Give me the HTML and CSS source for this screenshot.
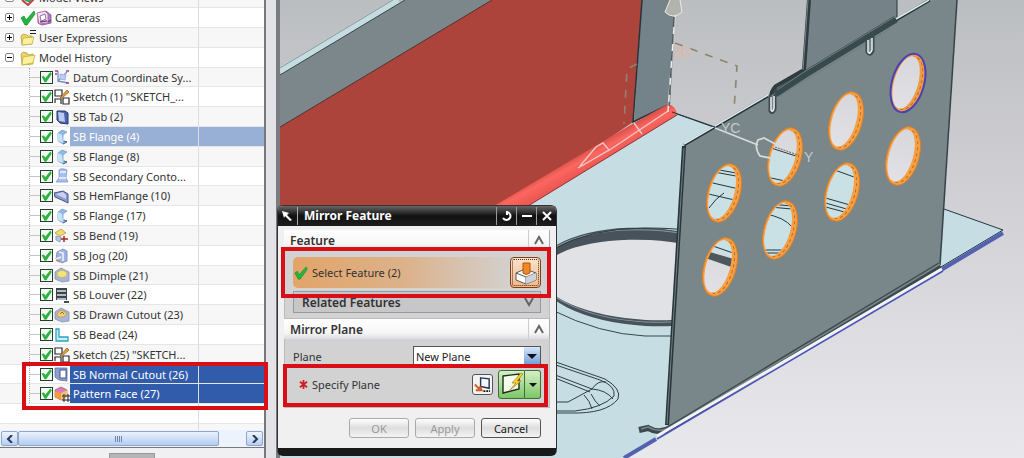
FILE: index.html
```
<!DOCTYPE html>
<html lang="en">
<head>
  <meta charset="UTF-8">
  <meta name="viewport" content="width=device-width, initial-scale=1.0">
  <title>Mirror Feature</title>
  <link rel="stylesheet" href="styles.css">
</head>
<body>

  <svg class="symbols" aria-hidden="true">
    <symbol id="check" viewBox="0 0 16 16"><path d="M1 8 4 6 6 10 14 1 15 4 7 15 5 15Z" fill="#22b83c" stroke="#12862a" stroke-width=".7"/></symbol>
    <symbol id="views" viewBox="0 0 16 16"><path d="M1 8 7 3 14 6 9 12Z" fill="#3cb899" stroke="#237f69"/><path d="M2 10 8 15 15 8" fill="none" stroke="#b8453a" stroke-width="2"/></symbol>
    <symbol id="camera" viewBox="0 0 16 16"><path d="M2 5 10 1 15 5 15 13 6 15 2 13Z" fill="#a883c4" stroke="#7a4b93" stroke-width=".8"/><path d="M1 3 9 1 12 4 12 13 3 14Z" fill="#f3e2f3" stroke="#c15d86" stroke-width=".9"/><path d="M4 6 9 4 10 9 5 11Z" fill="#fff" stroke="#8a72b0"/><path d="M4 12 11 11M12 12 15 10" stroke="#6a3f9a" stroke-width="1.4"/></symbol>
    <symbol id="folder" viewBox="0 0 16 16"><path d="M1 4 3 2 7 3 8 5 13 4 13 14 2 15Z" fill="#e9d568" stroke="#b9a137" stroke-width=".8"/><path d="M3 7 15 5 13 13 2 15Z" fill="#fbf09d" stroke="#c8b14b" stroke-width=".8"/></symbol>
    <symbol id="folder-eq" viewBox="0 0 16 16"><path d="M1 6 3 4 7 5 8 6 12 6 12 14 2 15Z" fill="#e9d568" stroke="#b9a137" stroke-width=".8"/><path d="M3 8 14 7 12 14 2 15Z" fill="#fbf09d" stroke="#c8b14b" stroke-width=".8"/><path d="M10 .5H16M10 3.5H16" stroke="#222"/></symbol>
    <symbol id="datum" viewBox="0 0 16 16"><path d="M4 13V2M4 12 14 14M4 12 13 3" fill="none" stroke="#7d8bc4" stroke-width="1.3"/><path d="M6 5 12 6 11 11 6 10Z" fill="#bfcdf0" stroke="#8ba0dc" stroke-width=".7"/><path d="M1 2H4M12 2H15M12 14H15M1 5H3" stroke="#a5487c" stroke-width="1.5"/></symbol>
    <symbol id="sketch" viewBox="0 0 16 16"><path d="M1 1H8V7H1ZM1 14V10H7V15M9 15V9H15V15Z" fill="#fff" stroke="#2b2b2b" stroke-width="1.2"/><path d="M6 9 13 1 15 3 8 9Z" fill="#e5a73a" stroke="#8b5a1b" stroke-width=".8"/></symbol>
    <symbol id="tab" viewBox="0 0 16 16"><path d="M3 2 11 2 14 4 14 15 6 14 3 11Z" fill="#4c62ad" stroke="#27366f"/><path d="M4 3 10 4 11 13 5 12Z" fill="#b9c9f0"/></symbol>
    <symbol id="flange" viewBox="0 0 16 16"><path d="M4 4 8 1 13 3 9 6 9 12 13 13 9 15 4 12Z" fill="#8ebbe2" stroke="#6f98c4" stroke-width=".7"/><path d="M4 4 8 6 9 14 4 12Z" fill="#cae4f7"/><path d="M10 12 13 13 9 15" fill="none" stroke="#4f6d92"/></symbol>
    <symbol id="contour" viewBox="0 0 16 16"><path d="M5 2C7 0 11 1 13 2L12 10 14 14 2 14 5 10Z" fill="#a9bdee" stroke="#7f96ce" stroke-width=".8"/><path d="M6 4 12 4M5 10 12 10" stroke="#dfe8ff" stroke-width="2"/></symbol>
    <symbol id="hem" viewBox="0 0 16 16"><path d="M0 5 9 3 14 6 14 15 10 13 1 9Z" fill="#8e9acb" stroke="#4a5588"/><path d="M2 6 9 4 12 7 12 11Z" fill="#cad2ef"/></symbol>
    <symbol id="bend" viewBox="0 0 16 16"><path d="M1 5 7 1 12 5 6 8Z" fill="#f1db72" stroke="#b69b31" stroke-width=".8"/><path d="M2 8 7 9 6 14 2 12Z" fill="#b9c6e8" stroke="#8290bd" stroke-width=".8"/><path d="M7 11H14M10 8V14" stroke="#a42b2b" stroke-width="1.5"/></symbol>
    <symbol id="jog" viewBox="0 0 16 16"><path d="M3 4 9 1 13 3 13 13 8 15 2 11Z" fill="#9eb3e2" stroke="#7488bd" stroke-width=".8"/><path d="M5 4 9 5 9 13M2 11 7 9" fill="none" stroke="#eff4ff" stroke-width="1.6"/><path d="M2 12 6 14" stroke="#c08878" stroke-width="1.5"/></symbol>
    <symbol id="dimple" viewBox="0 0 16 16"><path d="M1 5 7 1 15 5 15 14 8 15 1 12Z" fill="#a9b5d6" stroke="#8591b4" stroke-width=".8"/><ellipse cx="8" cy="7" rx="5" ry="3.5" fill="#f2e37a" stroke="#c6b24d" stroke-width=".7"/></symbol>
    <symbol id="louver" viewBox="0 0 16 16"><path d="M2 1H13V13H2Z" fill="#3d444c"/><path d="M3 4H12M3 8H12M3 12H12" stroke="#dde4ea" stroke-width="1.4"/><path d="M10 15H15" stroke="#111" stroke-width="1.5"/></symbol>
    <symbol id="drawn" viewBox="0 0 16 16"><path d="M1 5 7 1 15 5 15 14 8 15 1 12Z" fill="#a9b5d6" stroke="#8591b4" stroke-width=".8"/><path d="M3 7 7 3 13 6 10 10 4 10Z" fill="#f0d17a" stroke="#b98f45" stroke-width=".7"/><path d="M6 7 8 5 10 7" fill="none" stroke="#a06c2c"/></symbol>
    <symbol id="bead" viewBox="0 0 16 16"><path d="M2 2H5V10H14V14H2Z" fill="#bff3fb" stroke="#2ea3be" stroke-width="1.3"/></symbol>
    <symbol id="cutout" viewBox="0 0 16 16"><path d="M1 2 13 2 13 15 5 14 1 11Z" fill="#8fa0cd" stroke="#5c6da4" stroke-width=".8"/><path d="M6 4H12V12H6Z" fill="#fff" stroke="#44548a"/></symbol>
    <symbol id="pattern" viewBox="0 0 16 16"><path d="M1 4 7 1 13 4 13 10 7 14 1 11Z" fill="#d879c4" stroke="#9a5b32" stroke-width=".7"/><path d="M1 5 7 7 7 14 1 11Z" fill="#f39a3a"/><path d="M7 7 13 4 13 10 7 14Z" fill="#f5c069"/><path d="M9 9H11V11H9ZM13 9H15V11H13ZM9 13H11V15H9ZM13 13H15V15H13Z" fill="#fff" stroke="#222"/></symbol>
  </svg>

  <div class="app">
    <aside class="navigator">
      <ul class="tree" id="tree"></ul>
      <div class="mark mark-tree"></div>
      <div class="scrollbar">
        <button class="scroll-btn" aria-label="Scroll left"><svg viewBox="0 0 8 8"><path d="M6 0 2 4 6 8" /></svg></button>
        <div class="track"><div class="thumb"><span></span><span></span><span></span><span></span></div></div>
        <button class="scroll-btn" aria-label="Scroll right"><svg viewBox="0 0 8 8"><path d="M2 0 6 4 2 8" /></svg></button>
      </div>
      <div class="pane-handle"><span></span></div>
    </aside>
    <div class="splitter"></div>

    <main class="viewport">
      <svg class="model" viewBox="280 0 744 458" preserveAspectRatio="xMinYMin slice" role="img" aria-label="Sheet metal part">
        <defs>
          <linearGradient id="sky" x1="0" y1="0" x2="0" y2="1">
            <stop offset="0" stop-color="#bbbec0"/>
            <stop offset=".3" stop-color="#cbcbcf"/>
            <stop offset="1" stop-color="#e9e9ed"/>
          </linearGradient>
          <linearGradient id="hole" x1="0" y1="0" x2="0" y2="1">
            <stop offset="0" stop-color="#d5d5d9"/>
            <stop offset="1" stop-color="#e4e3e7"/>
          </linearGradient>
          <linearGradient id="hemfill" gradientUnits="userSpaceOnUse" x1="580" y1="150" x2="590" y2="168">
            <stop offset="0" stop-color="#cf4641"/>
            <stop offset=".5" stop-color="#fb6660"/>
            <stop offset="1" stop-color="#ee5853"/>
          </linearGradient>
          <clipPath id="bore"><ellipse cx="-2" cy="0" rx="12" ry="27"/></clipPath>
        </defs>
        <rect x="280" y="0" width="744" height="458" fill="url(#sky)"/>

        <!-- floor plate -->
        <path d="M280 200H530L677 114 1003 230V233L628 458H280Z" fill="#c6dde3"/>
        <path d="M677 114 1003 230" stroke="#23363c" fill="none"/>
        <path d="M1003 230 941 267" stroke="#23363c" fill="none"/>
        <path d="M1003 233 941 270M656 439 624 458" stroke="#5361b0" stroke-width="4" fill="none"/>

        <!-- large round opening -->
        <g transform="rotate(3 648 278)">
          <ellipse cx="648" cy="277" rx="112" ry="49" fill="#47525a"/>
          <ellipse cx="648" cy="276" rx="110" ry="46" fill="none" stroke="#87999f"/>
          <ellipse cx="648" cy="280" rx="107" ry="40" fill="#e1e2e5"/>
        </g>
        <path d="M552 250Q590 228 645 228T690 236" fill="none" stroke="#2b3b42"/>
        <path d="M552 310Q600 334 645 336H672" fill="none" stroke="#34464d"/>

        <!-- bead -->
        <g fill="none" stroke="#2d3f46">
          <path d="M550 360 605 379Q622 389 618 399Q606 414 570 413H550"/>
          <path d="M550 363 600 380Q616 386 614 396Q602 408 575 411H550"/>
          <path d="M550 373 592 389Q598 380 606 382M550 402H568L592 389Q606 390 613 399M591 394Q595 402 600 406M584 395Q590 401 592 409M550 376 590 392"/>
        </g>

        <!-- back wall -->
        <path d="M280 75 405 0H492L280 127Z" fill="#7b878b"/>
        <path d="M280 71 398 0" stroke="#c5dce1" stroke-width="6"/>
        <path d="M280 75 405 0" stroke="#384a52" fill="none"/>
        <path d="M280 68 393 0" stroke="#8a9a9f" fill="none"/>
        <path d="M280 127 492 0H642L633 122 510 206H280Z" fill="#ad443c"/>
        <path d="M280 127 492 0" stroke="#4f3030"/>
        <path d="M642 0H676L670 106 634 122Z" fill="#74838a"/>
        <path d="M642 0 633 122 668 105" fill="none" stroke="#26333a" stroke-width="1.5"/>
        <path d="M494 206 634 123 668 104Q676 106 677 115L528 206Z" fill="url(#hemfill)"/>
        <path d="M677 115 528 206" stroke="#8e3534" fill="none"/>

        <!-- datum axes -->
        <path d="M675 14 668 112" stroke="#edeeee" stroke-width="1.5" fill="none"/>
        <path d="M675 0 669 106" stroke="#53595b" stroke-width="1.5" stroke-dasharray="10 7" fill="none"/>
        <path d="M670 0 665 12Q673 20 682 12L680 0" fill="#b1b3ae" stroke="#eeece0"/>
        <path d="M675 43 737 66 734 110M637 64 627 69 624 124" stroke="#8f8270" stroke-width="1.6" stroke-dasharray="8 8" fill="none"/>
        <path d="M668 111 608 151M580 166 596 147 603 143 609 150 578 168M634 123 642 134" fill="none" stroke="#f0c9c2" stroke-width="1.4"/>
        <text x="673" y="57" class="axis axis-z">ZC</text>

        <!-- rear tab -->
        <path d="M809 0H897V18L770 98 775 89 803 72Z" fill="#758287"/>
        <path d="M809 0 804 70 776 86Q771 91 771 98" fill="none" stroke="#2e3b40" stroke-width="4"/>
        <path d="M808 0 803 70" stroke="#78868c" fill="none"/>
        <path d="M897 0V18" stroke="#26343a"/>

        <!-- perforated wall -->
        <path d="M684 146 770 96 806 75 896 21 932 0H957L940 266 668 430Z" fill="#79868a"/>
        <path d="M775 94 804 75 896 19" stroke="#394a4e" stroke-width="7" fill="none"/>
        <path d="M777 90 804 72 896 16M778 97 804 81 890 29" stroke="#6d7f83" fill="none"/>
        <path d="M896 20 930 0M684 145 768 96" stroke="#22343b" stroke-width="3" fill="none"/>
        <path d="M896 19 929 0M684 144 768 95" stroke="#e4eaec" stroke-width="1.5" fill="none"/>
        <path d="M957 0 940 265" stroke="#35434a" stroke-width="1.5"/>
        <path d="M684 146 667 425" stroke="#283539" stroke-width="4"/>
        <path d="M684 148 667 424" stroke="#718086" stroke-width="1"/>
        <path d="M770 95V111Q773 115 775 109V94M867 38V52Q870 57 873 51V35" fill="none" stroke="#3d4c52" stroke-width="3"/>
        <path d="M771 97V110Q773 113 774 108V96M868 40V52Q870 55 872 50V38" fill="none" stroke="#eef1f2" stroke-width="1.5"/>
        <path d="M940 265 672 427Q660 435 648 428L639 430" fill="none" stroke="#3c494c" stroke-width="6"/>
        <path d="M940 264 672 426Q660 434 648 427L641 429" fill="none" stroke="#7a878a" stroke-width="1.5"/>
        <path d="M942 269 657 436" stroke="#f3f4f8" stroke-width="3"/>
        <path d="M943 271 657 439" stroke="#4b52b8" stroke-width="1.5"/>

        <g id="holes"></g>

        <path d="M672 112 715 127" stroke="#25363d" fill="none"/>
        <path d="M715 128 758 145M770 158 760 156Q754 147 758 140L764 138 779 146" fill="none" stroke="#d5dbda" stroke-width="1.8"/>
        <path d="M775 147 798 155" stroke="#5c665c" stroke-dasharray="2 1"/>
        <text x="721" y="133" class="axis">YC</text>
        <text x="804" y="162" class="axis">Y</text>
      </svg>
    </main>

    <section class="dialog" aria-label="Mirror Feature">
      <header class="title-bar">
        <svg class="title-cursor" viewBox="0 0 12 12"><path d="M1 1 8 3 6 5 11 10 9 11 4 6 3 8Z"/></svg>
        <h1>Mirror Feature</h1>
        <button aria-label="Reset"><svg viewBox="0 0 12 12"><path d="M6 2A4 4 0 1 1 2 8M6 1V5"/></svg></button>
        <button aria-label="Minimize"><svg viewBox="0 0 12 12"><path d="M1 6H11"/></svg></button>
        <button aria-label="Close"><svg viewBox="0 0 12 12"><path d="M2 2 10 10M10 2 2 10"/></svg></button>
      </header>
      <div class="dialog-body">
        <div class="group-head"><h2>Feature</h2><button aria-label="Collapse Feature"><svg viewBox="0 0 12 12"><path d="M2 10 6 3 10 10"/></svg></button></div>
        <div class="group">
          <div class="select-row">
            <svg class="row-check"><use href="#check"/></svg>
            <span>Select Feature (2)</span>
            <button class="pick-btn" aria-label="Select Feature">
              <svg viewBox="0 0 26 26"><path d="M3 13 12 9 23 13 23 20 13 24 3 20Z" fill="#fff" stroke="#55585c"/><path d="M3 13 13 17 23 13M13 17V24" fill="none" stroke="#55585c"/><path d="M13 17 23 13V20L13 24Z" fill="#cdd2d8"/><path d="M10 3H17V13Q13 16 10 13Z" fill="#f08a24" stroke="#b4520d"/></svg>
            </button>
          </div>
          <div class="related"><h3>Related Features</h3><button aria-label="Expand Related Features"><svg viewBox="0 0 12 12"><path d="M2 2 6 9 10 2"/></svg></button></div>
        </div>
        <div class="group-head"><h2>Mirror Plane</h2><button aria-label="Collapse Mirror Plane"><svg viewBox="0 0 12 12"><path d="M2 10 6 3 10 10"/></svg></button></div>
        <div class="group group-plane">
          <div class="plane-row">
            <label for="plane">Plane</label>
            <div class="combo">
              <select id="plane"><option>New Plane</option><option>Existing Plane</option></select>
              <span class="combo-arrow"></span>
            </div>
          </div>
          <div class="specify-row">
            <svg class="required" viewBox="0 0 10 10"><path d="M5 0V10M1 2 9 8M9 2 1 8"/></svg>
            <span>Specify Plane</span>
            <button class="plane-btn" aria-label="Plane Dialog">
              <svg viewBox="0 0 20 20"><path d="M8 3 17 4V14L8 12Z" fill="#f5f8ff" stroke="#26355c" stroke-width="1.5"/><path d="M2 10 6 14 9 13M3 16H9L7 12" fill="none" stroke="#cc5a25" stroke-width="2"/><path d="M11 17H18" stroke="#111" stroke-width="2" stroke-dasharray="2 1"/></svg>
            </button>
            <button class="type-btn" aria-label="Inferred plane">
              <svg viewBox="0 0 26 26"><path d="M4 5 20 3V18L4 22Z" fill="#f2fbec" stroke="#1f2b1c" stroke-width="1.4"/><path d="M22 2 13 12H17L11 19 22 10H18L24 3Z" fill="#ffd42e" stroke="#a87710" stroke-width=".7"/></svg>
            </button>
            <button class="type-arrow" aria-label="Plane types"></button>
          </div>
        </div>
        <div class="actions">
          <button disabled>OK</button>
          <button disabled>Apply</button>
          <button>Cancel</button>
        </div>
      </div>
      <div class="mark mark-feature"></div>
      <div class="mark mark-plane"></div>
    </section>
  </div>

  <script>
    const groups = [
      { label: "Model Views", icon: "views", sign: "+" },
      { label: "Cameras", icon: "camera", sign: "+", ok: true },
      { label: "User Expressions", icon: "folder-eq", sign: "+" },
      { label: "Model History", icon: "folder", sign: "-" }
    ];

    const features = [
      ["Datum Coordinate Sy...", "datum"],
      ["Sketch (1) \"SKETCH_...", "sketch"],
      ["SB Tab (2)", "tab"],
      ["SB Flange (4)", "flange", "soft"],
      ["SB Flange (8)", "flange"],
      ["SB Secondary Conto...", "contour"],
      ["SB HemFlange (10)", "hem"],
      ["SB Flange (17)", "flange"],
      ["SB Bend (19)", "bend"],
      ["SB Jog (20)", "jog"],
      ["SB Dimple (21)", "dimple"],
      ["SB Louver (22)", "louver"],
      ["SB Drawn Cutout (23)", "drawn"],
      ["SB Bead (24)", "bead"],
      ["Sketch (25) \"SKETCH...", "sketch"],
      ["SB Normal Cutout (26)", "cutout", "selected"],
      ["Pattern Face (27)", "pattern", "selected"]
    ];

    const icon = name => `<svg class="icon"><use href="#${name}"/></svg>`;

    const groupRows = groups.map(g => `
      <li class="row">
        <div class="cell">
          <button class="expander" aria-label="${g.label}">${g.sign === "+" ? '<svg viewBox="0 0 7 7"><path d="M1 3H6V4H1ZM3 1H4V6H3Z"/></svg>' : '<svg viewBox="0 0 7 7"><path d="M1 3H6V4H1Z"/></svg>'}</button>
          ${g.ok ? icon("check") : ""}${icon(g.icon)}
          <span class="group-label">${g.label}</span>
        </div>
      </li>`);

    const featureRows = features.map(([label, name, state], i) => `
      <li class="row feature ${state || ""}">
        <div class="cell">
          <input type="checkbox" id="f${i}" checked>
          ${icon(name)}
          <label for="f${i}">${label}</label>
        </div>
        <div class="cell-rest"></div>
      </li>`);

    const emptyRows = ['<li class="row"><div class="cell"></div></li>', '<li class="row"><div class="cell"></div></li>'];

    document.getElementById("tree").innerHTML = [...groupRows, ...featureRows, ...emptyRows].join("");

    // x, y of each hole, what shows through it
    const holes = [
      [908, 83, "", "blue"],
      [846, 121, ""],
      [903, 156, ""],
      [785, 157, '<path class="floor" d="M-20-10 20 4V40H-20Z"/><path class="edge" d="M-20-11 20 2M-14 21 5 25"/>'],
      [842, 192, '<path class="floor" d="M-20-40H20V40H-20Z"/><path class="edge" d="M-10-23 12-15M-20 5 15 15M-20 10 15 20M-20 14 10 22"/>'],
      [724, 193, '<path class="floor" d="M-20-40H20V40H-20Z"/><path class="edge" d="M-10-24 12-20M-10-21 12-17M-20-12 15-4M-20 0 15 8M-15 15Q-8 5 0 0"/>'],
      [780, 230, '<path class="floor" d="M-20-40H20V40H-20Z"/><path class="edge" d="M-10-26 12-24M-10-23 12-21M-15-16Q4-13 12-3M-20 20H10M-20 23H10"/>'],
      [720, 267, '<path class="floor" d="M-20-40H20V-10L-20-18Z"/><path class="rim" d="M-20-18 20-6V3L-20-11Z"/><path class="edge" d="M-10-22 16-13"/>']
    ];

    document.getElementById("holes").innerHTML = holes.map(([x, y, view, tone]) => `
      <g transform="translate(${x} ${y})">
        <g transform="rotate(16)">
          <ellipse class="${tone === "blue" ? "ring-blue" : "ring"}" rx="16" ry="30"/>
          <ellipse class="ring-shade" cx="1" rx="12" ry="27"/>
          <g clip-path="url(#bore)">
            <rect x="-20" y="-40" width="40" height="80" fill="url(#hole)"/>
            <g transform="rotate(-16)">${view}</g>
          </g>
        </g>
      </g>`).join("");
  </script>
</body>
</html>
```
FILE: styles.css
```
* {
  box-sizing: border-box;
}

body {
  margin: 0;
  font-family: "Noto Sans", "Open Sans", sans-serif;
  font-size: 11px;
  color: #333;
}

h1, h2, h3, ul {
  margin: 0;
  padding: 0;
}

button, select {
  font: inherit;
  padding: 0;
}

.symbols {
  display: none;
}

.app {
  position: relative;
  display: flex;
  height: 100vh;
  overflow: hidden;
}

/* part navigator */
.navigator {
  position: relative;
  display: flex;
  flex-direction: column;
  flex: 0 0 266px;
  background: #f0f0f2;
  border-right: 2px solid #77787c;
}

.tree {
  flex: 1;
  min-height: 0;
  overflow: hidden;
  margin-top: -12px;
  list-style: none;
  background: #fff;
}

.row {
  display: flex;
  height: 20px;
  border-bottom: 1px solid #e6e6e8;
}

.row:nth-child(5n) {
  height: 19px;
}

.row:nth-child(odd) {
  background: #f7f7f8;
}

.cell {
  display: flex;
  align-items: center;
  flex: 0 0 199px;
  padding-left: 5px;
  border-right: 1px solid #dcdce0;
  white-space: nowrap;
}

.cell-rest {
  flex: 1;
}

.feature .cell {
  position: relative;
  padding-left: 40px;
}

/* dotted guide lines */
.feature .cell::before {
  content: "";
  position: absolute;
  left: 29px;
  top: 0;
  width: 10px;
  height: 100%;
  border-left: 1px dotted #aaa;
  background: linear-gradient(#c4c4c4, #c4c4c4) 0 50% / 10px 1px no-repeat;
}

.expander {
  width: 9px;
  height: 9px;
  margin-right: 6px;
  border: 1px solid #85878c;
  border-radius: 2px;
  background: #fff;
  line-height: 0;
}

.expander svg {
  width: 7px;
  height: 7px;
}

.icon {
  flex: none;
  width: 16px;
  height: 16px;
}

.group-label {
  margin-left: 3px;
}

input[type="checkbox"] {
  appearance: none;
  flex: none;
  width: 13px;
  height: 13px;
  margin: 0 1px 0 0;
  border: 1px solid #24402c;
  background: #f2faf2;
}

input[type="checkbox"]:checked::before {
  content: "";
  display: block;
  height: 11px;
  background: #2fb243;
  clip-path: polygon(5% 45%, 25% 40%, 40% 60%, 85% 5%, 98% 22%, 48% 98%, 32% 98%);
}

.feature label {
  flex: 1;
  display: flex;
  align-items: center;
  align-self: stretch;
  padding-left: 3px;
}

.soft label,
.soft .cell-rest {
  background: #98afd6;
  color: #fff;
}

.selected label,
.selected .cell-rest {
  background: #315cac;
  color: #fff;
}

.scrollbar {
  display: flex;
  height: 18px;
  padding: 1px;
  background: #edf3fc;
  border-bottom: 1px solid #777;
}

.scroll-btn {
  width: 17px;
  border: 1px solid #8fa5ca;
  border-radius: 2px;
  background: linear-gradient(#f0f5fe, #b6cdf2);
  line-height: 0;
}

.scroll-btn svg {
  width: 8px;
  height: 8px;
  fill: none;
  stroke: #24385e;
  stroke-width: 2;
}

.track {
  flex: 1;
}

.thumb {
  display: flex;
  justify-content: center;
  align-items: center;
  gap: 1px;
  width: 88%;
  height: 100%;
  border: 1px solid #8fa5ca;
  border-radius: 2px;
  background: linear-gradient(#eaf2fe, #b4ccf2);
}

.thumb span {
  width: 1px;
  height: 6px;
  background: #6f86ae;
}

.pane-handle {
  height: 10px;
  padding-top: 5px;
}

.pane-handle span {
  display: block;
  width: 46px;
  height: 7px;
  margin: 0 auto;
  background: #b5b5b8;
  border: 1px solid #98989c;
}

.splitter {
  flex: 0 0 14px;
  background: #e3e3e7;
  border-right: 4px solid #797b80;
}

/* graphics window */
.viewport {
  flex: 1;
  min-width: 0;
}

.model {
  display: block;
  width: 100%;
  height: 100%;
}

.axis {
  font-family: "Liberation Sans", sans-serif;
  font-size: 14px;
  fill: #c3cccc;
}

.axis-z {
  fill: #e6b79c;
}

.ring {
  fill: #f6a043;
  stroke: #dd8127;
}

.ring-blue {
  fill: #ef9a45;
  stroke: #4a40b4;
  stroke-width: 2;
}

.ring-shade {
  fill: none;
  stroke: #b86d28;
  stroke-dasharray: 3 3;
}

.floor {
  fill: #c9e0e5;
}

.rim {
  fill: #4e575b;
}

.edge {
  fill: none;
  stroke: #24363c;
}

/* mirror feature dialog */
.dialog {
  position: absolute;
  left: 277px;
  top: 205px;
  width: 280px;
  border: 1px solid #333;
  border-bottom: 8px solid #191919;
  border-radius: 6px;
  background: #f0f0f0;
}

.title-bar {
  display: flex;
  align-items: center;
  height: 20px;
  border-radius: 5px 5px 0 0;
  background: linear-gradient(#666, #111 50%, #1d1d1d);
  color: #fff;
}

.title-cursor {
  width: 12px;
  height: 12px;
  margin: 0 4px 0 3px;
  fill: #fff;
}

.title-bar h1 {
  flex: 1;
  padding-left: 6px;
  border-left: 1px solid #aaa;
  font-size: 12px;
  line-height: 18px;
}

.title-bar button {
  width: 20px;
  height: 18px;
  border: 0;
  border-left: 1px solid #999;
  background: none;
  line-height: 0;
}

.title-bar button svg {
  width: 12px;
  height: 12px;
  fill: none;
  stroke: #fff;
  stroke-width: 2;
}

.dialog-body {
  padding: 4px 6px 10px;
}

.group-head {
  display: flex;
  align-items: center;
  height: 20px;
  background: linear-gradient(#fff, #f6f6f6 70%, #dcdce2);
}

.group-head h2,
.related h3 {
  flex: 1;
  padding-left: 6px;
  font-size: 12px;
  font-weight: 600;
}

.group-head button,
.related button {
  width: 22px;
  height: 20px;
  border: 0;
  background: none;
  line-height: 0;
}

.group-head button {
  border-left: 1px solid #ccc;
  border-right: 1px solid #aaa;
}

.group-head svg,
.related svg {
  width: 12px;
  height: 12px;
  fill: none;
  stroke: #666;
  stroke-width: 2;
}

.group {
  height: 69px;
  padding: 7px 8px 0;
  border: 1px solid #bbb;
  border-top: 0;
  background: #d2d2d3;
}

.select-row {
  display: flex;
  align-items: center;
  height: 31px;
  border-radius: 5px;
  background: linear-gradient(90deg, #e2a469, #dcb28a 45%, #d2d2d3 90%);
}

.select-row span,
.specify-row span {
  flex: 1;
}

.row-check {
  width: 14px;
  height: 14px;
  margin: 0 4px 0 1px;
}

.pick-btn {
  width: 31px;
  height: 31px;
  border: 1px solid #7c3f1c;
  border-radius: 4px;
  outline: 1px dotted #5b2b10;
  outline-offset: -3px;
  background: linear-gradient(#fbe3cc, #f0b98a);
  line-height: 0;
}

.pick-btn svg,
.type-btn svg {
  width: 26px;
  height: 26px;
}

.related {
  display: flex;
  align-items: center;
  height: 22px;
  margin-top: 3px;
  border: 1px solid #999;
  background: #c7c7c9;
}

.related h3 {
  padding-left: 8px;
}

.plane-row,
.specify-row {
  display: flex;
  align-items: center;
}

.plane-row {
  justify-content: space-between;
  height: 20px;
}

.combo {
  position: relative;
  width: 128px;
  height: 20px;
}

.combo select {
  appearance: none;
  width: 100%;
  height: 100%;
  padding-left: 2px;
  border: 1px solid #555;
  border-radius: 0;
  background: #fff;
  color: #222;
}

.combo-arrow {
  position: absolute;
  right: 1px;
  top: 1px;
  width: 16px;
  height: 18px;
  background: linear-gradient(#d6e6fa, #6d9bd8);
  pointer-events: none;
}

.combo-arrow::after,
.type-arrow::after {
  content: "";
  display: block;
  margin: 7px auto 0;
  width: 0;
  border: 5px solid transparent;
  border-top-color: #111;
  border-bottom: 0;
}

.specify-row {
  height: 36px;
}

.required {
  width: 9px;
  height: 9px;
  margin: 0 4px 0 6px;
  stroke: #cf1f25;
  stroke-width: 2;
}

.plane-btn {
  width: 21px;
  height: 21px;
  margin-right: 5px;
  border: 1px solid #555;
  border-radius: 3px;
  background: #f3f3f3;
  line-height: 0;
}

.plane-btn svg {
  width: 19px;
  height: 19px;
}

.type-btn,
.type-arrow {
  height: 29px;
  border: 1px solid #3e6d33;
  background: linear-gradient(#d5f0c6, #7cc667);
  line-height: 0;
}

.type-btn {
  width: 27px;
  border-radius: 3px 0 0 3px;
}

.type-arrow {
  width: 16px;
  border-left: 0;
  border-radius: 0 3px 3px 0;
}

.type-arrow::after {
  margin-top: 2px;
  border-width: 4px;
  border-bottom: 0;
}

.actions {
  display: flex;
  justify-content: flex-end;
  gap: 6px;
  padding: 10px 9px 0 0;
}

.actions button {
  width: 60px;
  height: 20px;
  border: 1px solid #555;
  border-radius: 3px;
  background: linear-gradient(#fff, #ddd 50%, #f4f4f4);
  color: #222;
}

.actions button:disabled {
  border-color: #aaa;
  color: #999;
}

/* red callouts */
.mark {
  position: absolute;
  border: 4px solid #d70f16;
  pointer-events: none;
}

.mark-tree {
  left: 22px;
  top: 362px;
  width: 246px;
  height: 48px;
  z-index: 1;
}

.mark-feature {
  left: 3px;
  top: 41px;
  width: 270px;
  height: 51px;
}

.mark-plane {
  left: 5px;
  top: 158px;
  width: 265px;
  height: 43px;
}
```
